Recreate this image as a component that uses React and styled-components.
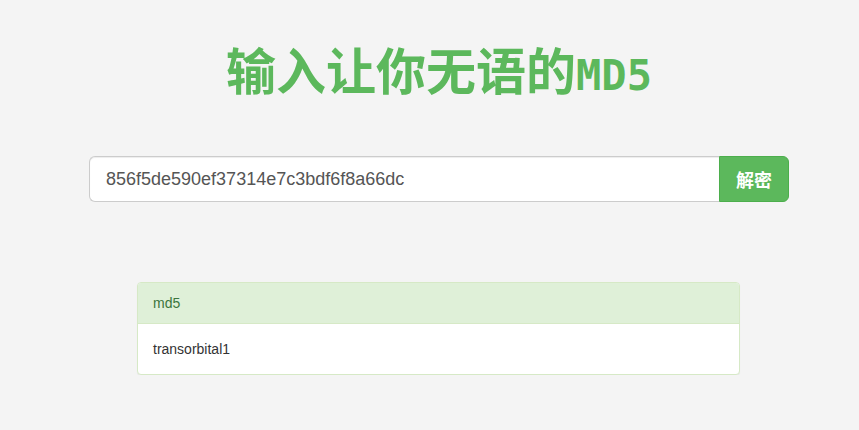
import React from "react";
import styled, { createGlobalStyle } from "styled-components";

const Global = createGlobalStyle`
    body {
        margin: 0;
        background: #f4f4f4;
        font-family: "Liberation Sans", Arial, "Noto Sans CJK SC", sans-serif;
        font-size: 14px;
        color: #333;
    }
`

const Page = styled.div`
    width: 700px;
    margin-left: 89px;
    padding-top: 32px;
`

const Title = styled.h1`
    margin: 0;
    text-align: center;
    color: #5cb85c;
    font-family: "Noto Sans CJK SC", sans-serif;
    font-weight: 700;
    font-size: 50px;
    line-height: 72px;
    height: 74px;
`

const Latin = styled.span`
    font-family: "DejaVu Sans Mono", monospace;
    font-weight: 700;
    font-size: 42px;
`

const SearchRow = styled.div`
    display: flex;
    margin-top: 50px;
`

const Input = styled.input`
    flex: 1;
    height: 46px;
    box-sizing: border-box;
    padding: 10px 16px;
    font-family: "Liberation Sans", Arial, sans-serif;
    font-size: 18px;
    color: #555;
    background: #fff;
    border: 1px solid #ccc;
    border-right: none;
    border-radius: 6px 0 0 6px;
    box-shadow: inset 0 1px 1px rgba(0,0,0,.075);
    outline: none;
`

const Button = styled.button`
    width: 70px;
    height: 46px;
    border: 1px solid #4cae4c;
    border-radius: 0 6px 6px 0;
    background: #5cb85c;
    color: #fff;
    font-family: "Noto Sans CJK SC", sans-serif;
    font-weight: 700;
    font-size: 18px;
    padding: 0;
`

const Panel = styled.div`
    width: 603px;
    box-sizing: border-box;
    margin: 80px 0 0 48px;
    background: #fff;
    border: 1px solid #d6e9c6;
    border-radius: 4px;
    box-shadow: 0 1px 1px rgba(0,0,0,.05);
    overflow: hidden;
`

const PanelHeading = styled.div`
    padding: 10px 15px;
    line-height: 20px;
    background: #dff0d8;
    color: #3c763d;
    border-bottom: 1px solid #d6e9c6;
`

const PanelBody = styled.div`
    padding: 15px;
    line-height: 20px;
`

const App = () => {
    return (
        <Page>
            <Global />
            <Title>输入让你无语的<Latin>MD5</Latin></Title>
            <SearchRow>
                <Input defaultValue="856f5de590ef37314e7c3bdf6f8a66dc" />
                <Button>解密</Button>
            </SearchRow>
            <Panel>
                <PanelHeading>md5</PanelHeading>
                <PanelBody>transorbital1</PanelBody>
            </Panel>
        </Page>
    )
}

export default App;
